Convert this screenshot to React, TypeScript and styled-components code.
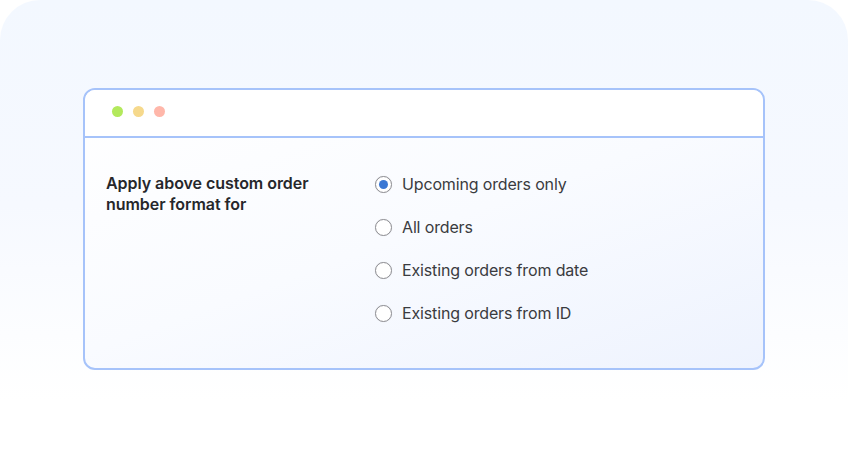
import React from "react";
import styled, { createGlobalStyle } from "styled-components";

const Global = createGlobalStyle`
  html, body { margin: 0; padding: 0; background: #ffffff; }
  body { font-family: Inter, "Noto Sans", sans-serif; -webkit-font-smoothing: antialiased; }
`;

const Stage = styled.div`
  width: 848px;
  height: 455px;
  box-sizing: border-box;
  border-radius: 40px;
  background: linear-gradient(180deg, #f3f8ff 0%, #f6f9ff 45%, #ffffff 88%);
  padding: 88px 83px 0 83px;
`;

const Window = styled.div`
  width: 682px;
  height: 282px;
  box-sizing: border-box;
  border: 2px solid #a6c3fa;
  border-radius: 12px;
  overflow: hidden;
  display: flex;
  flex-direction: column;
  background: linear-gradient(160deg, #ffffff 0%, #f9fbff 50%, #eef3fe 100%);
`;

const TitleBar = styled.div`
  height: 48px;
  flex: none;
  box-sizing: border-box;
  border-bottom: 2px solid #a6c3fa;
  background: #ffffff;
  display: flex;
  align-items: center;
  gap: 10px;
  padding: 0 0 3px 27px;
`;

const Dot = styled.span<{ $color: string }>`
  width: 11px;
  height: 11px;
  border-radius: 50%;
  background: ${(p) => p.$color};
`;

const Body = styled.div`
  display: flex;
  padding: 35px 0 0 21px;
`;

const Label = styled.div`
  width: 269px;
  font-size: 16px;
  font-weight: 600;
  line-height: 21px;
  color: #26272b;
  letter-spacing: -0.05px;
`;

const Options = styled.div`
  display: flex;
  flex-direction: column;
  gap: 23px;
  padding-top: 1px;
`;

const Option = styled.label`
  display: flex;
  align-items: center;
  gap: 10px;
  height: 20px;
  font-size: 16px;
  color: #3a3b40;
  cursor: pointer;
  letter-spacing: -0.15px;
`;

const Radio = styled.span<{ $checked?: boolean }>`
  width: 17px;
  height: 17px;
  box-sizing: border-box;
  border-radius: 50%;
  border: 1px solid #8e8e93;
  background: #ffffff;
  box-shadow: 0 0 1px rgba(0, 0, 0, 0.15);
  display: flex;
  align-items: center;
  justify-content: center;
  &::after {
    content: "";
    width: 9px;
    height: 9px;
    border-radius: 50%;
    background: ${(p) => (p.$checked ? "#3b78d4" : "transparent")};
  }
`;

const options = [
  "Upcoming orders only",
  "All orders",
  "Existing orders from date",
  "Existing orders from ID",
];

export default function App() {
  return (
    <>
      <Global />
      <Stage>
        <Window>
          <TitleBar>
            <Dot $color="#b3e95c" />
            <Dot $color="#f6d98c" />
            <Dot $color="#ffb7aa" />
          </TitleBar>
          <Body>
            <Label>
              Apply above custom order
              <br />
              number format for
            </Label>
            <Options>
              {options.map((o, i) => (
                <Option key={o}>
                  <Radio $checked={i === 0} />
                  {o}
                </Option>
              ))}
            </Options>
          </Body>
        </Window>
      </Stage>
    </>
  );
}
